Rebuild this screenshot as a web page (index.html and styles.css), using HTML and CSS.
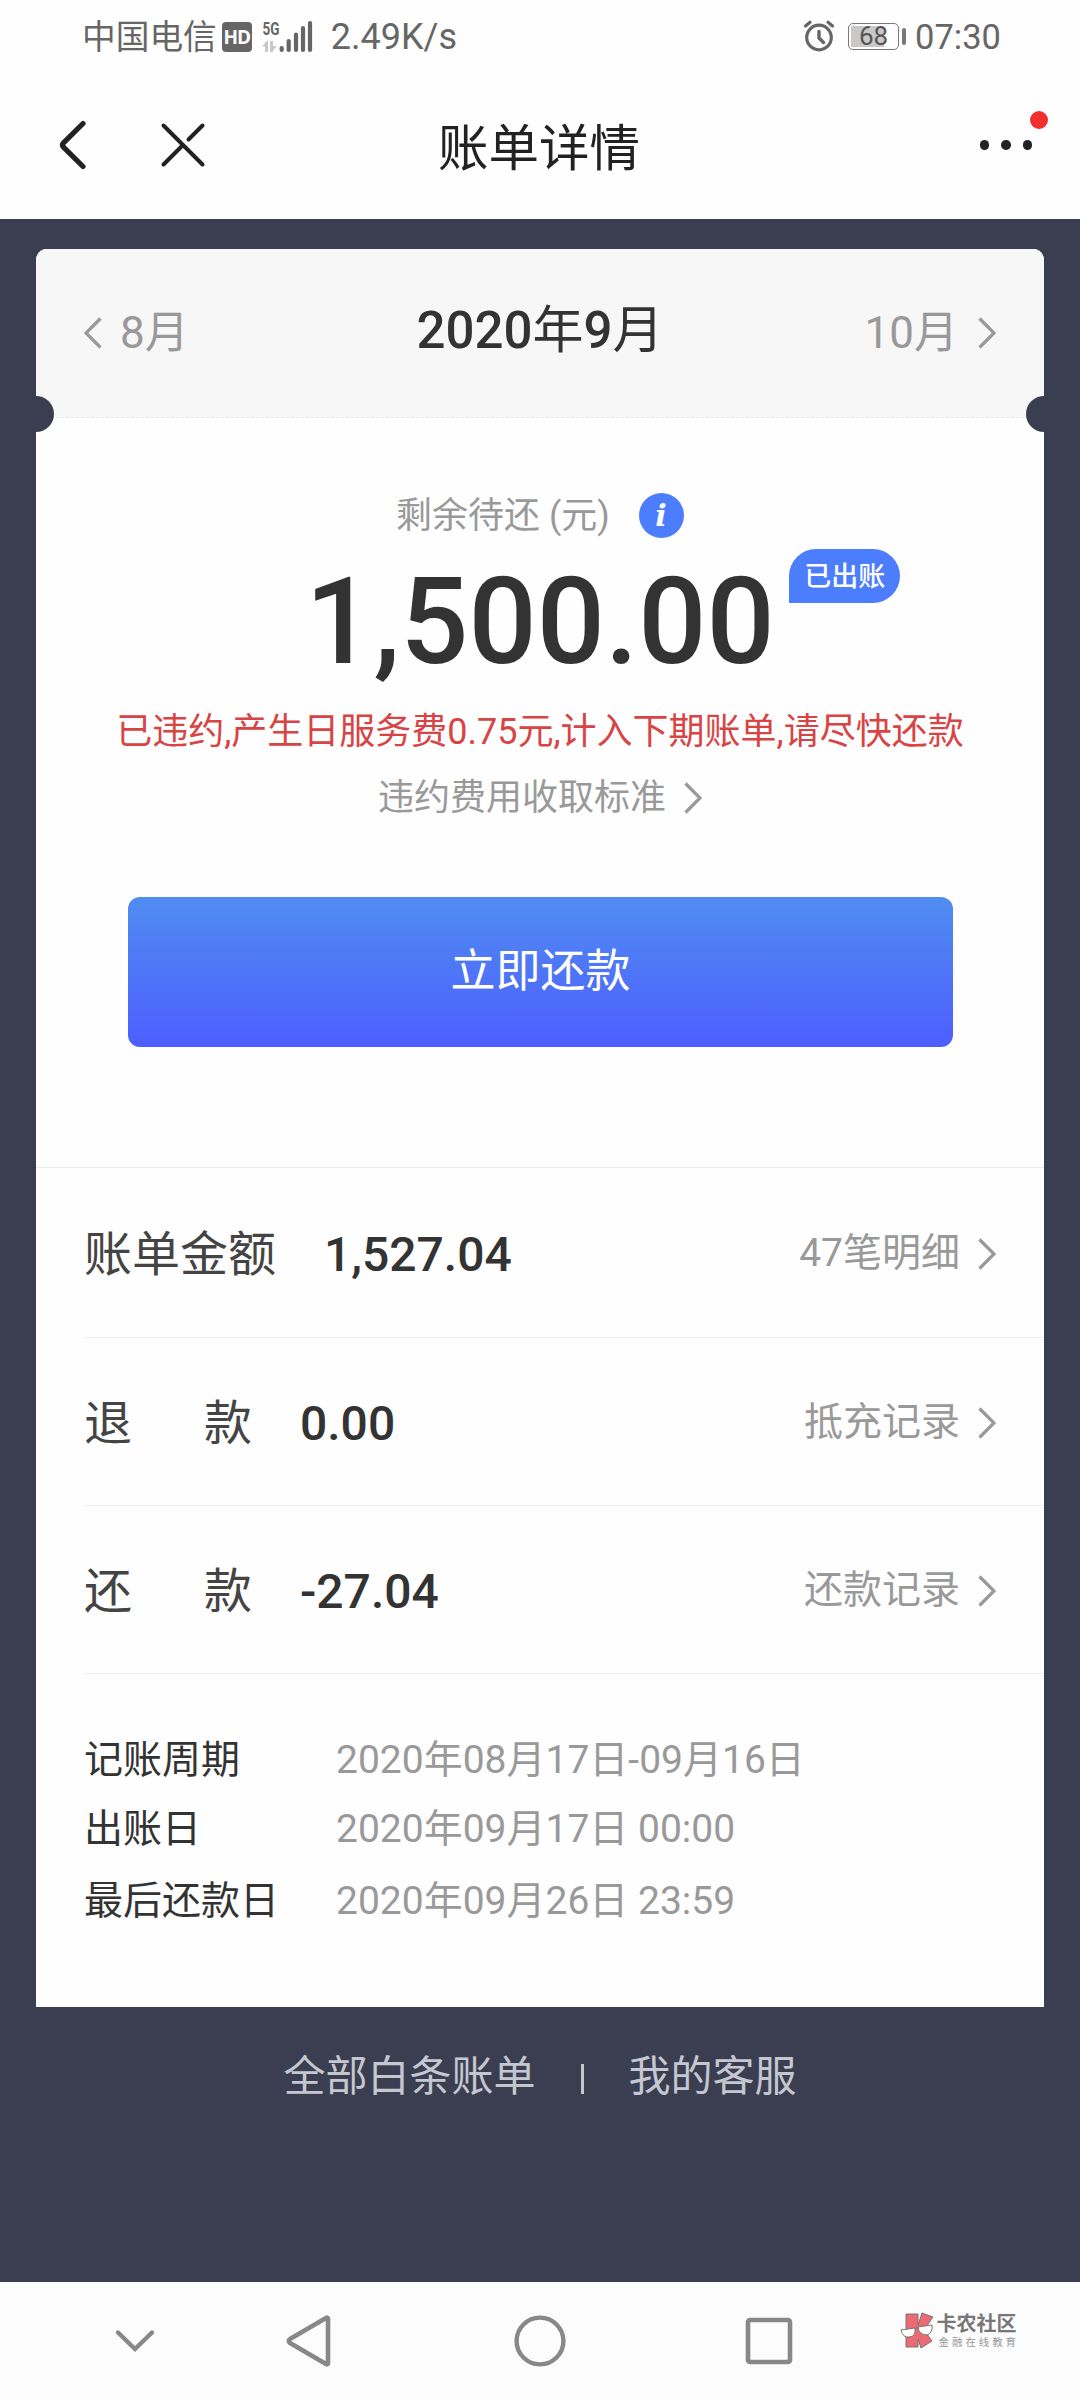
FILE: index.html
```html
<!DOCTYPE html>
<html lang="zh-CN">
<head>
<meta charset="utf-8">
<title>账单详情</title>
<link rel="stylesheet" href="styles.css">
</head>
<body>
<svg class="defs" width="0" height="0">
  <symbol id="next" viewBox="0 0 18 32"><path d="M1.5 1.5 16 16 1.5 30.5" fill="none" stroke="currentColor" stroke-width="3.2"/></symbol>
</svg>

<header class="status">
  <span class="carrier">中国电信</span>
  <span class="hd">HD</span>
  <svg class="signal" width="52" height="42" viewBox="0 -8 52 42">
    <text x="0.5" y="15.5" class="net" textLength="17" lengthAdjust="spacingAndGlyphs">5G</text>
    <path d="M4.500 33V23M9.500 22V33" stroke="#c8c8c8" stroke-width="3"/>
    <path d="M0 27.500 6 21V27.500ZM8.500 27H15L8.500 34Z" fill="#c8c8c8"/>
    <path d="M19.700 29V31M26.700 22V31M34 15.500V31M41 9V31M48 4V31" stroke="#666" stroke-width="4.200" stroke-linecap="round"/>
  </svg>
  <span class="speed">2.49K/s</span>
  <svg class="alarm" width="32" height="34" viewBox="0 0 32 34">
    <g fill="none" stroke="#666" stroke-linecap="round">
      <circle cx="16" cy="18.500" r="12.300" stroke-width="3.200"/>
      <path d="M16 12.500V19L20.500 23.500" stroke-width="3.400"/>
      <path d="M2.500 7 7 3.200M29.500 7 25 3.200" stroke-width="3.200"/>
    </g>
  </svg>
  <span class="battery"><span class="charge"></span><span class="percent">68</span></span>
  <span class="nub"></span>
  <time class="clock">07:30</time>
</header>

<nav class="topbar">
  <svg class="back" width="28" height="52" viewBox="0 0 28 52"><path d="M24 4.500 4.500 23.800Q2.500 26 4.500 28.200L24 47.500" fill="none" stroke="#222" stroke-width="5.200" stroke-linecap="round"/></svg>
  <svg class="close" width="48" height="48" viewBox="0 0 48 48"><path d="M4.500 4.500 43.500 43.500M4.500 43.500 24 24M29.500 18.500 43.500 4.500" fill="none" stroke="#222" stroke-width="4" stroke-linecap="round"/></svg>
  <h1>账单详情</h1>
  <div class="more"><i></i><i></i><i></i><b class="unread"></b></div>
</nav>

<main>
  <article class="card">
    <div class="months">
      <a class="prev"><svg class="flip" width="18" height="32"><use href="#next"/></svg><span>8月</span></a>
      <h2>2020<span>年</span>9<span>月</span></h2>
      <a class="following"><span>10月</span><svg width="18" height="32"><use href="#next"/></svg></a>
    </div>

    <section class="due">
      <p class="label">剩余待还 (元)
        <svg class="info" width="46" height="46" viewBox="0 0 46 46"><circle cx="22.500" cy="22.500" r="22.500" fill="#4c7dfd"/><text x="22" y="33" text-anchor="middle">i</text></svg>
      </p>
      <p class="amount"><span>1,500.00</span><em class="billed">已出账</em></p>
      <p class="warning">已违约,产生日服务费0.75元,计入下期账单,请尽快还款</p>
      <a class="rules"><span>违约费用收取标准</span><svg width="18" height="32"><use href="#next"/></svg></a>
      <button class="pay">立即还款</button>
    </section>

    <ul class="rows">
      <li><span class="name">账单金额</span><strong>1,527.04</strong><a><span>47笔明细</span><svg width="18" height="32"><use href="#next"/></svg></a></li>
      <li><span class="name spread"><i>退</i><i>款</i></span><strong>0.00</strong><a><span>抵充记录</span><svg width="18" height="32"><use href="#next"/></svg></a></li>
      <li><span class="name spread"><i>还</i><i>款</i></span><strong>-27.04</strong><a><span>还款记录</span><svg width="18" height="32"><use href="#next"/></svg></a></li>
    </ul>

    <dl class="dates">
      <dt>记账周期</dt><dd>2020年08月17日-09月16日</dd>
      <dt>出账日</dt><dd>2020年09月17日 00:00</dd>
      <dt>最后还款日</dt><dd>2020年09月26日 23:59</dd>
    </dl>
  </article>

  <div class="links"><a>全部白条账单</a><span class="bar"></span><a>我的客服</a></div>
</main>

<footer class="system">
  <svg width="42" height="26" viewBox="0 0 42 26"><path d="M4 4.500 21 21 38 4.500" fill="none" stroke="#888" stroke-width="4.400" stroke-linecap="round"/></svg>
  <svg width="48" height="56" viewBox="0 0 48 56"><path d="M43 5.500V50.500Q42.500 52 41 51L5 30Q2.500 28 5 26L41 5Q42.500 4 43 5.500Z" fill="none" stroke="#888" stroke-width="4.600" stroke-linejoin="round"/></svg>
  <svg width="52" height="52" viewBox="0 0 52 52"><circle cx="26" cy="26" r="23.400" fill="none" stroke="#888" stroke-width="4.400"/></svg>
  <svg width="48" height="48" viewBox="0 0 48 48"><rect x="3" y="3" width="42" height="42" rx="2" fill="none" stroke="#888" stroke-width="4.600"/></svg>
  <div class="brand">
    <svg width="35" height="38" viewBox="0 0 35 38">
      <path d="M6 2H18V13L22 1 33 5 24 18 32 29 21 36 18 27V35H6Z" fill="#ec6b73" stroke="#777" stroke-width="1"/>
      <path d="M1 18 15 16Q16 25 9 25 3 26 1 18ZM18 15 32 13Q33 21 27 23 19 23 18 15Z" fill="#fff" stroke="#777"/>
      <path d="M15 17Q17 15 18.500 16" fill="none" stroke="#777"/>
    </svg>
    <div><strong>卡农社区</strong><small>金融在线教育</small></div>
  </div>
</footer>
</body>
</html>
```
FILE: styles.css
```css
* { box-sizing: border-box; margin: 0; padding: 0; }

body {
  width: 1080px;
  height: 2400px;
  display: flex;
  flex-direction: column;
  background: #fefefe;
  color: #333;
  font-family: Roboto, "Noto Sans CJK SC", sans-serif;
  overflow: hidden;
}

svg { display: block; flex: none; }
i, em { font-style: normal; }
a { color: #999; white-space: nowrap; }
.defs { position: absolute; }

/* status bar */
.status {
  height: 75px;
  padding: 0 80px 0 82px;
  display: flex;
  align-items: center;
  color: #666;
  line-height: 75px;
}
.carrier { font-size: 33.7px; }
.hd {
  width: 30px;
  height: 30px;
  margin: 0 10px 2px 5px;
  border-radius: 4px;
  background: #666;
  color: #fefefe;
  font: bold 19px/30px "Open Sans", sans-serif;
  letter-spacing: -1px;
  text-align: center;
}
.signal { margin-bottom: 11px; }
.net { font: bold 18px Roboto, sans-serif; fill: #666; }
.speed { margin-left: 17px; font-size: 36px; }
.alarm { margin: 0 13px 3px auto; }
.battery {
  position: relative;
  width: 51px;
  height: 27px;
  margin-bottom: 2px;
  border: 1.5px solid #777;
  border-radius: 5px;
}
.charge {
  position: absolute;
  inset: 2px 14px 2px 2px;
  background: #c8c8c8;
}
.percent {
  position: relative;
  display: block;
  color: #555;
  font-size: 26px;
  line-height: 25px;
  text-align: center;
}
.nub {
  width: 4px;
  height: 17px;
  margin: 0 9px 2px 3px;
  border-radius: 2px;
  background: #777;
}
.clock { margin-right: -1px; font-size: 34.5px; }

/* title bar */
.topbar {
  position: relative;
  height: 144px;
  padding: 0 48px 4px 59px;
  display: flex;
  align-items: center;
}
.close { margin-left: 72px; }
h1 {
  width: 204px;
  margin-left: 231px;
  color: #222;
  font-size: 50.5px;
  font-weight: 400;
  line-height: 60px;
  padding-top: 7px;
}
.more {
  position: relative;
  display: flex;
  gap: 12px;
  margin-left: auto;
}
.more i { width: 9.5px; height: 9.5px; border-radius: 50%; background: #222; }
.unread {
  position: absolute;
  left: 50px;
  top: -29px;
  width: 18px;
  height: 18px;
  border-radius: 50%;
  background: #f03030;
}

/* bill card */
main {
  height: 2063px;
  padding: 30px 36px 0;
  background: #3a3e50;
}
.card {
  height: 1758px;
  border-radius: 11px 11px 0 0;
  background: #fefefe;
}
.months {
  position: relative;
  display: grid;
  grid-template-columns: 1fr auto 1fr;
  height: 169px;
  padding: 0 48px;
  border-bottom: 1px dashed #e8e8e8;
  border-radius: 11px 11px 0 0;
  background: #f7f7f8;
}
.months::before, .months::after {
  content: "";
  position: absolute;
  top: 147px;
  width: 18px;
  height: 36px;
  background: #3a3e50;
}
.months::before { left: 0; border-radius: 0 18px 18px 0; }
.months::after { right: 0; border-radius: 18px 0 0 18px; }
.months a { display: flex; align-items: center; height: 168px; font-size: 44px; }
.months a span { padding-bottom: 8px; }
.prev { gap: 18px; }
.following { justify-content: flex-end; gap: 20px; }
.flip { transform: scaleX(-1); }
h2 { font-size: 51px; font-weight: 500; line-height: 164px; }
h2 span { font-weight: 400; }

.due {
  height: 749px;
  display: flex;
  flex-direction: column;
  align-items: center;
}
.label {
  display: flex;
  align-items: center;
  gap: 29px;
  margin: 75px 0 0 1px;
  color: #999;
  font-size: 36px;
  line-height: 46px;
}
.info text { font: italic bold 30px "DejaVu Serif", serif; fill: #fff; }
.amount {
  position: relative;
  margin-top: 11px;
  font-size: 120px;
  font-weight: 500;
  line-height: 144px;
}
.billed {
  position: absolute;
  left: 484px;
  top: -1px;
  width: 111px;
  height: 54px;
  border-radius: 27px 27px 27px 0;
  background: #4c7dfd;
  color: #fff;
  font-size: 27px;
  font-weight: 500;
  line-height: 57px;
  text-align: center;
}
.warning {
  margin-top: 11px;
  color: #d84444;
  font-size: 36px;
  line-height: 54px;
  white-space: nowrap;
}
.rules {
  display: flex;
  align-items: center;
  gap: 18px;
  margin-top: 12px;
  font-size: 36px;
  line-height: 54px;
}
.pay {
  width: 825px;
  height: 150px;
  margin: 72px 0 0 1px;
  border: 0;
  border-radius: 12px;
  background: linear-gradient(#508cf0, #4d5eff);
  color: #fff;
  font: 45px/150px Roboto, "Noto Sans CJK SC", sans-serif;
}

.rows { border-top: 1px solid #ececec; list-style: none; }
.rows li {
  display: flex;
  align-items: center;
  height: 168px;
  margin-left: 48px;
  padding-right: 48px;
  border-bottom: 1px solid #ececec;
}
.rows li:first-child { height: 170px; }
.name { width: 192px; padding-bottom: 5px; color: #444; font-size: 48px; }
.spread { display: flex; justify-content: space-between; width: 168px; }
.rows strong { margin-left: 48px; padding-top: 4px; font-size: 48px; font-weight: 500; }
.rows a {
  display: flex;
  align-items: center;
  gap: 18px;
  margin-left: auto;
  padding-top: 2px;
  font-size: 39px;
}
.rows a span { padding-bottom: 9px; }

.dates {
  display: grid;
  grid-template-columns: 252px auto;
  grid-template-rows: 69px 72px 72px;
  padding: 52px 0 0 48px;
  font-size: 39px;
  line-height: 69px;
}
.dates dd { color: #999; }

.links {
  display: flex;
  align-items: center;
  justify-content: center;
  gap: 45px;
  margin-top: 43px;
  font-size: 42px;
  line-height: 54px;
}
.links a { color: #c5c7d0; }
.bar { width: 3px; height: 30px; margin-top: 3px; background: #c5c7d0; }

/* navigation keys */
.system {
  height: 118px;
  display: flex;
  align-items: center;
  padding: 0 61px 0 114px;
  background: #fcfcfc;
}
.system > svg:nth-child(2) { margin-left: 129px; }
.system > svg:nth-child(3) { margin-left: 181px; }
.system > svg:nth-child(4) { margin-left: 179px; }
.brand { display: flex; align-items: center; gap: 2px; margin: 0 0 21px auto; color: #777; }
.brand strong, .brand small { display: block; white-space: nowrap; }
.brand strong { font: bold 20px/20px "Noto Sans CJK SC", sans-serif; }
.brand small { padding: 2px 0 0 2px; color: #999; font: 10.5px/13px "Noto Sans CJK SC", sans-serif; letter-spacing: 2.9px; }
```
